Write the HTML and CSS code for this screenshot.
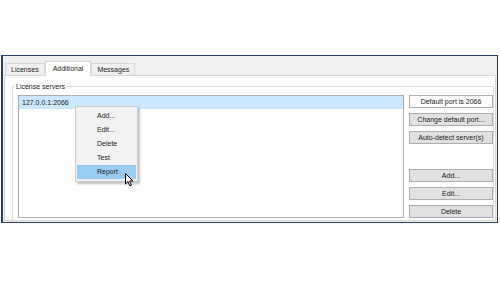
FILE: index.html
```html
<!DOCTYPE html>
<html lang="en">
<head>
    <meta charset="UTF-8">
    <title>License servers</title>
    <link rel="stylesheet" href="styles.css">
</head>
<body>
    <div class="window">
        <div class="tabs">
            <div class="tab">Licenses</div>
            <div class="tab active">Additional</div>
            <div class="tab">Messages</div>
        </div>
        <div class="page">
            <fieldset class="group">
                <legend>License servers</legend>
                <div class="servers">
                    <div class="list">
                        <div class="row selected">127.0.0.1:2066</div>
                        <ul class="menu">
                            <li>Add...</li>
                            <li>Edit...</li>
                            <li>Delete</li>
                            <li>Test</li>
                            <li class="hover">Report</li>
                        </ul>
                        <svg class="cursor" width="9" height="14" viewBox="0 0 9 14">
                            <path d="M0.5 0.5 L0.5 11 L3 8.6 L4.8 12.8 L6.4 12.1 L4.6 8 L8 8 Z" fill="#fff" stroke="#000" stroke-width="1" stroke-linejoin="round"/>
                        </svg>
                    </div>
                    <div class="buttons">
                        <div class="btn default">Default port is 2066</div>
                        <div class="btn">Change default port...</div>
                        <div class="btn">Auto-detect server(s)</div>
                        <div class="spacer"></div>
                        <div class="btn">Add...</div>
                        <div class="btn">Edit...</div>
                        <div class="btn">Delete</div>
                    </div>
                </div>
            </fieldset>
        </div>
    </div>
</body>
</html>
```

FILE: styles.css
```css
body {
    margin: 0;
    background: #fff;
    font-family: "Liberation Sans", Arial, sans-serif;
    font-size: 7px;
    color: #1a1a1a;
}
.window {
    box-sizing: border-box;
    margin: 55px 0 0 1px;
    width: 497px;
    height: 168px;
    border: 1px solid #2c3d66;
    border-left-width: 2px;
    background: #f0f0f0;
    display: flex;
    flex-direction: column;
}
.tabs {
    height: 19px;
    display: flex;
    align-items: flex-end;
    padding-left: 2px;
}
.tab {
    box-sizing: border-box;
    height: 12px;
    line-height: 11px;
    padding: 0 5px;
    border: 1px solid #d9d9d9;
    border-bottom: none;
    background: #f0f0f0;
}
.tab.active {
    height: 15px;
    line-height: 13px;
    padding: 0 7px;
    margin-bottom: -1px;
    background: #fff;
    position: relative;
}
.page {
    flex: 1;
    margin: 0 1px 1px 1px;
    background: #fff;
    border: 1px solid #d9d9d9;
    display: flex;
}
.group {
    flex: 1;
    margin: 6px 1px 0 7px;
    padding: 4px 0 0 5px;
    border: 1px solid #dcdcdc;
    border-bottom: none;
    min-width: 0;
}
.group legend {
    margin-left: -3px;
    padding: 0 1px;
    line-height: 9px;
}
.servers {
    display: flex;
    gap: 5px;
    height: 123px;
}
.list {
    flex: 1;
    position: relative;
    border: 1px solid #abadb3;
    background: #fff;
}
.row {
    height: 13px;
    line-height: 13px;
    padding-left: 3px;
}
.row.selected {
    background: #cce8ff;
}
.menu {
    position: absolute;
    left: 56px;
    top: 10px;
    width: 59px;
    margin: 0;
    padding: 2px 1px;
    list-style: none;
    background: #f2f2f2;
    border: 1px solid #cccccc;
    box-shadow: 2px 2px 2px rgba(0, 0, 0, 0.25);
}
.menu li {
    height: 14px;
    line-height: 14px;
    padding-left: 20px;
}
.menu li.hover {
    background: #99ccf3;
}
.cursor {
    position: absolute;
    left: 106px;
    top: 77px;
}
.buttons {
    width: 84px;
    display: flex;
    flex-direction: column;
    gap: 5px;
}
.btn {
    box-sizing: border-box;
    height: 13px;
    line-height: 11px;
    text-align: center;
    background: #e1e1e1;
    border: 1px solid #adadad;
}
.btn.default {
    background: #fdfdfd;
}
.spacer {
    flex: 1;
}
```
